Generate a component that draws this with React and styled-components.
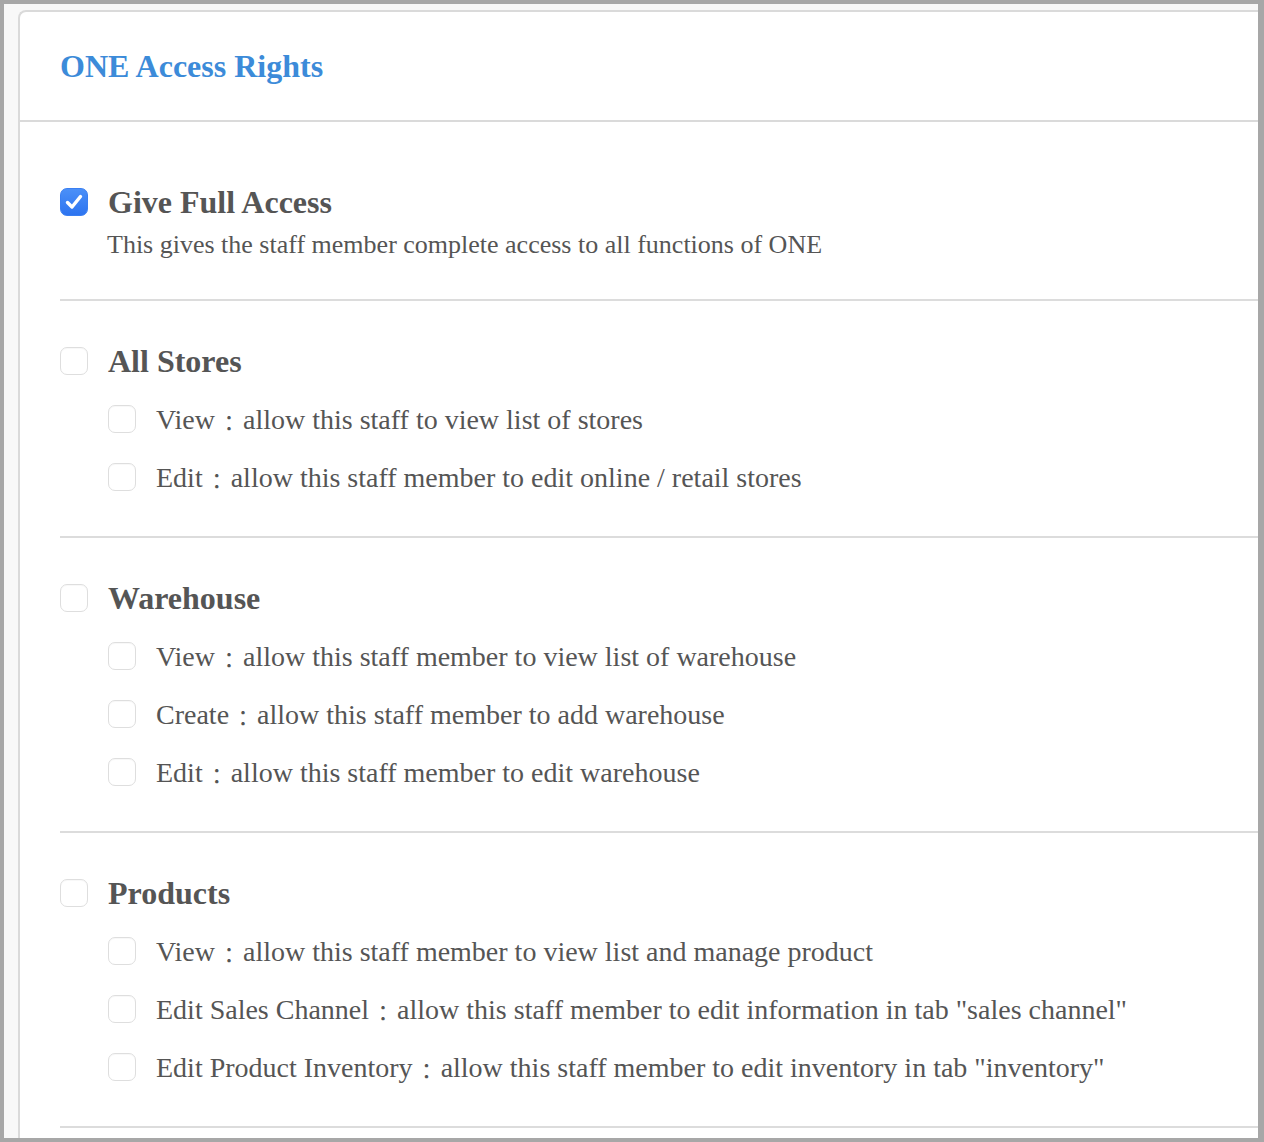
import React, { useState } from "react";
import styled, { createGlobalStyle } from "styled-components";

const Global = createGlobalStyle`
  html, body { margin: 0; padding: 0; background: #a7a7a7; }
  * { box-sizing: border-box; }
`;

const Frame = styled.div`
  width: 1264px;
  height: 1142px;
  border-style: solid;
  border-color: #a7a7a7;
  border-width: 4px 6px 4px 4px;
  overflow: hidden;
`;

const Page = styled.div`
  height: 100%;
  background: #f8f8f8;
  padding: 6px 0 0 14px;
  overflow: hidden;
`;

const Card = styled.div`
  width: calc(100% + 20px);
  min-height: 1200px;
  background: #ffffff;
  border-top: 2px solid #dadada;
  border-left: 2px solid #dadada;
  border-top-left-radius: 8px;
  font-family: "Liberation Serif", "Times New Roman", "Noto Sans CJK TC", serif;
  color: #555555;
`;

const Header = styled.div`
  height: 110px;
  display: flex;
  align-items: center;
  padding-left: 40px;
  border-bottom: 2px solid #dadada;
`;

const Title = styled.h1`
  margin: 0;
  font-size: 32px;
  font-weight: 700;
  color: #3c8bd9;
`;

const Body = styled.div`
  padding-left: 40px;
`;

const Section = styled.div`
  border-bottom: 2px solid #dcdcdc;
  padding: ${(p) => (p.$first ? "51px 0 40px" : "31px 0 30px")};
`;

const Row = styled.label`
  display: flex;
  align-items: center;
  gap: 20px;
  height: 58px;
  padding-left: ${(p) => (p.$indent ? "48px" : "0")};
  cursor: pointer;
`;

const HiddenInput = styled.input`
  position: absolute;
  opacity: 0;
  width: 0;
  height: 0;
  margin: 0;
`;

const Box = styled.span`
  flex: none;
  width: 28px;
  height: 28px;
  border-radius: 7px;
  display: flex;
  align-items: center;
  justify-content: center;
  background: ${(p) => (p.$checked ? "linear-gradient(#4b90f8, #2d74f0)" : "#ffffff")};
  border: 1px solid ${(p) => (p.$checked ? "#3a7ff2" : "#dedede")};
  box-shadow: ${(p) => (p.$checked ? "none" : "inset 0 1px 1px rgba(0,0,0,0.03)")};
`;

const Heading = styled.span`
  font-size: 32px;
  font-weight: 700;
  color: #555555;
`;

const ItemText = styled.span`
  font-size: 28px;
  color: #555555;
  white-space: nowrap;
`;

const Colon = styled.span`
  display: inline-block;
  width: 28px;
  text-align: center;
  font-family: "Noto Sans CJK TC", "Noto Sans CJK JP", sans-serif;
  font-size: 22px;
  position: relative;
  top: 2px;
`;

const Desc = styled.p`
  margin: 0;
  padding-left: 47px;
  font-size: 26px;
  line-height: 28px;
  color: #555555;
`;

function Check({ checked, onChange }) {
  return (
    <>
      <HiddenInput type="checkbox" checked={checked} onChange={onChange} />
      <Box $checked={checked}>
        {checked && (
          <svg width="22" height="22" viewBox="0 0 22 22" fill="none">
            <path
              d="M4.5 11.5 L9 16 L17.5 5.5"
              stroke="#ffffff"
              strokeWidth="3.4"
              strokeLinecap="round"
              strokeLinejoin="round"
            />
          </svg>
        )}
      </Box>
    </>
  );
}

const groups = [
  {
    name: "All Stores",
    items: [
      ["View", "allow this staff to view list of stores"],
      ["Edit", "allow this staff member to edit online / retail stores"],
    ],
  },
  {
    name: "Warehouse",
    items: [
      ["View", "allow this staff member to view list of warehouse"],
      ["Create", "allow this staff member to add warehouse"],
      ["Edit", "allow this staff member to edit warehouse"],
    ],
  },
  {
    name: "Products",
    items: [
      ["View", "allow this staff member to view list and manage product"],
      ["Edit Sales Channel", 'allow this staff member to edit information in tab "sales channel"'],
      ["Edit Product Inventory", 'allow this staff member to edit inventory in tab "inventory"'],
    ],
  },
];

export default function App() {
  const [state, setState] = useState({ full: true });
  const toggle = (k) => () => setState((s) => ({ ...s, [k]: !s[k] }));

  return (
    <>
      <Global />
      <Frame>
        <Page>
          <Card>
            <Header>
              <Title>ONE Access Rights</Title>
            </Header>
            <Body>
              <Section $first>
                <Row>
                  <Check checked={!!state.full} onChange={toggle("full")} />
                  <Heading>Give Full Access</Heading>
                </Row>
                <Desc>This gives the staff member complete access to all functions of ONE</Desc>
              </Section>
              {groups.map((g) => (
                <Section key={g.name}>
                  <Row>
                    <Check checked={!!state[g.name]} onChange={toggle(g.name)} />
                    <Heading>{g.name}</Heading>
                  </Row>
                  {g.items.map(([label, text]) => {
                    const k = g.name + "-" + label;
                    return (
                      <Row $indent key={k}>
                        <Check checked={!!state[k]} onChange={toggle(k)} />
                        <ItemText>
                          {label}
                          <Colon>：</Colon>
                          {text}
                        </ItemText>
                      </Row>
                    );
                  })}
                </Section>
              ))}
            </Body>
          </Card>
        </Page>
      </Frame>
    </>
  );
}
